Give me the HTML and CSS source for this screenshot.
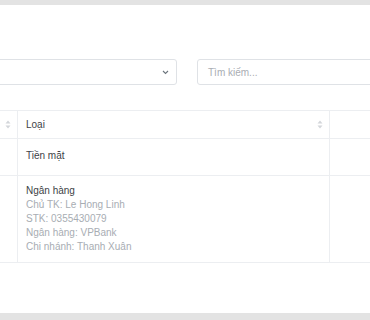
FILE: index.html
```html
<!DOCTYPE html>
<html lang="vi">
<head>
<meta charset="utf-8">
<link rel="stylesheet" href="styles.css">
</head>
<body>
<div class="band band-top"></div>
<div class="panel">
  <div class="filters">
    <div class="select">
      <svg class="chev" width="7" height="5" viewBox="0 0 7 5"><path d="M1 1 L3.5 3.5 L6 1" fill="none" stroke="#6c757d" stroke-width="1.1"/></svg>
    </div>
    <div class="search">Tìm kiếm...</div>
  </div>
  <table class="grid">
    <thead>
      <tr>
        <th class="c1"><span class="th-in"><span></span><svg class="sort" width="6" height="9" viewBox="0 0 6 9"><path d="M3 0.5 L5.5 3.5 L0.5 3.5Z M3 8.5 L5.5 5.5 L0.5 5.5Z" fill="#d3d6da"/></svg></span></th>
        <th class="c2"><span class="th-in"><span>Loại</span><svg class="sort" width="6" height="9" viewBox="0 0 6 9"><path d="M3 0.5 L5.5 3.5 L0.5 3.5Z M3 8.5 L5.5 5.5 L0.5 5.5Z" fill="#d3d6da"/></svg></span></th>
        <th class="c3"></th>
      </tr>
    </thead>
    <tbody>
      <tr class="r1">
        <td class="c1"></td>
        <td class="c2"><div class="main">Tiền mặt</div></td>
        <td class="c3"></td>
      </tr>
      <tr>
        <td class="c1"></td>
        <td class="c2">
          <div class="main">Ngân hàng</div>
          <div class="sub">Chủ TK: Le Hong Linh</div>
          <div class="sub">STK: 0355430079</div>
          <div class="sub">Ngân hàng: VPBank</div>
          <div class="sub">Chi nhánh: Thanh Xuân</div>
        </td>
        <td class="c3"></td>
      </tr>
    </tbody>
  </table>
</div>
<div class="band band-bottom"></div>
</body>
</html>
```
FILE: styles.css
```css
html, body {
  margin: 0;
  padding: 0;
  width: 370px;
  height: 320px;
  overflow: hidden;
  background: #ffffff;
  font-family: "Liberation Sans", Arial, sans-serif;
  font-size: 10px;
  color: #3d4246;
}
.band {
  background: #e3e3e3;
}
.band-top {
  height: 5px;
}
.band-bottom {
  height: 7px;
}
.panel {
  height: 308px;
  padding-top: 54px;
  box-sizing: border-box;
  margin-left: -23px;
}
.filters {
  display: flex;
  gap: 20px;
}
.select {
  flex: 0 0 200px;
  height: 26px;
  box-sizing: border-box;
  border: 1px solid #dfe2e6;
  border-radius: 3px;
  display: flex;
  align-items: center;
  justify-content: flex-end;
  padding-right: 7px;
}
.chev {
  display: block;
}
.search {
  flex: 0 0 220px;
  height: 26px;
  box-sizing: border-box;
  border: 1px solid #dfe2e6;
  border-radius: 3px;
  padding-left: 10px;
  display: flex;
  align-items: center;
  color: #a9adb3;
}
.grid {
  margin-top: 25px;
  border-collapse: collapse;
  table-layout: fixed;
  width: 500px;
}
.grid th, .grid td {
  border: 1px solid #eceef1;
  text-align: left;
  font-weight: normal;
  vertical-align: top;
}
.grid .c1 { width: 40px; }
.grid .c2 { width: 312px; }
.grid .c3 { width: 148px; }
.grid th {
  height: 28px;
  box-sizing: border-box;
  padding: 0 6px 0 8px;
  vertical-align: middle;
}
.th-in {
  display: flex;
  justify-content: space-between;
  align-items: center;
}
.sort {
  display: block;
}
.grid td {
  padding: 8px 8px;
  line-height: 14px;
}
.r1 td {
  height: 37px;
  box-sizing: border-box;
  padding-top: 10px;
}
.main {
  color: #3d4246;
}
.sub {
  color: #a8adb3;
}
```
